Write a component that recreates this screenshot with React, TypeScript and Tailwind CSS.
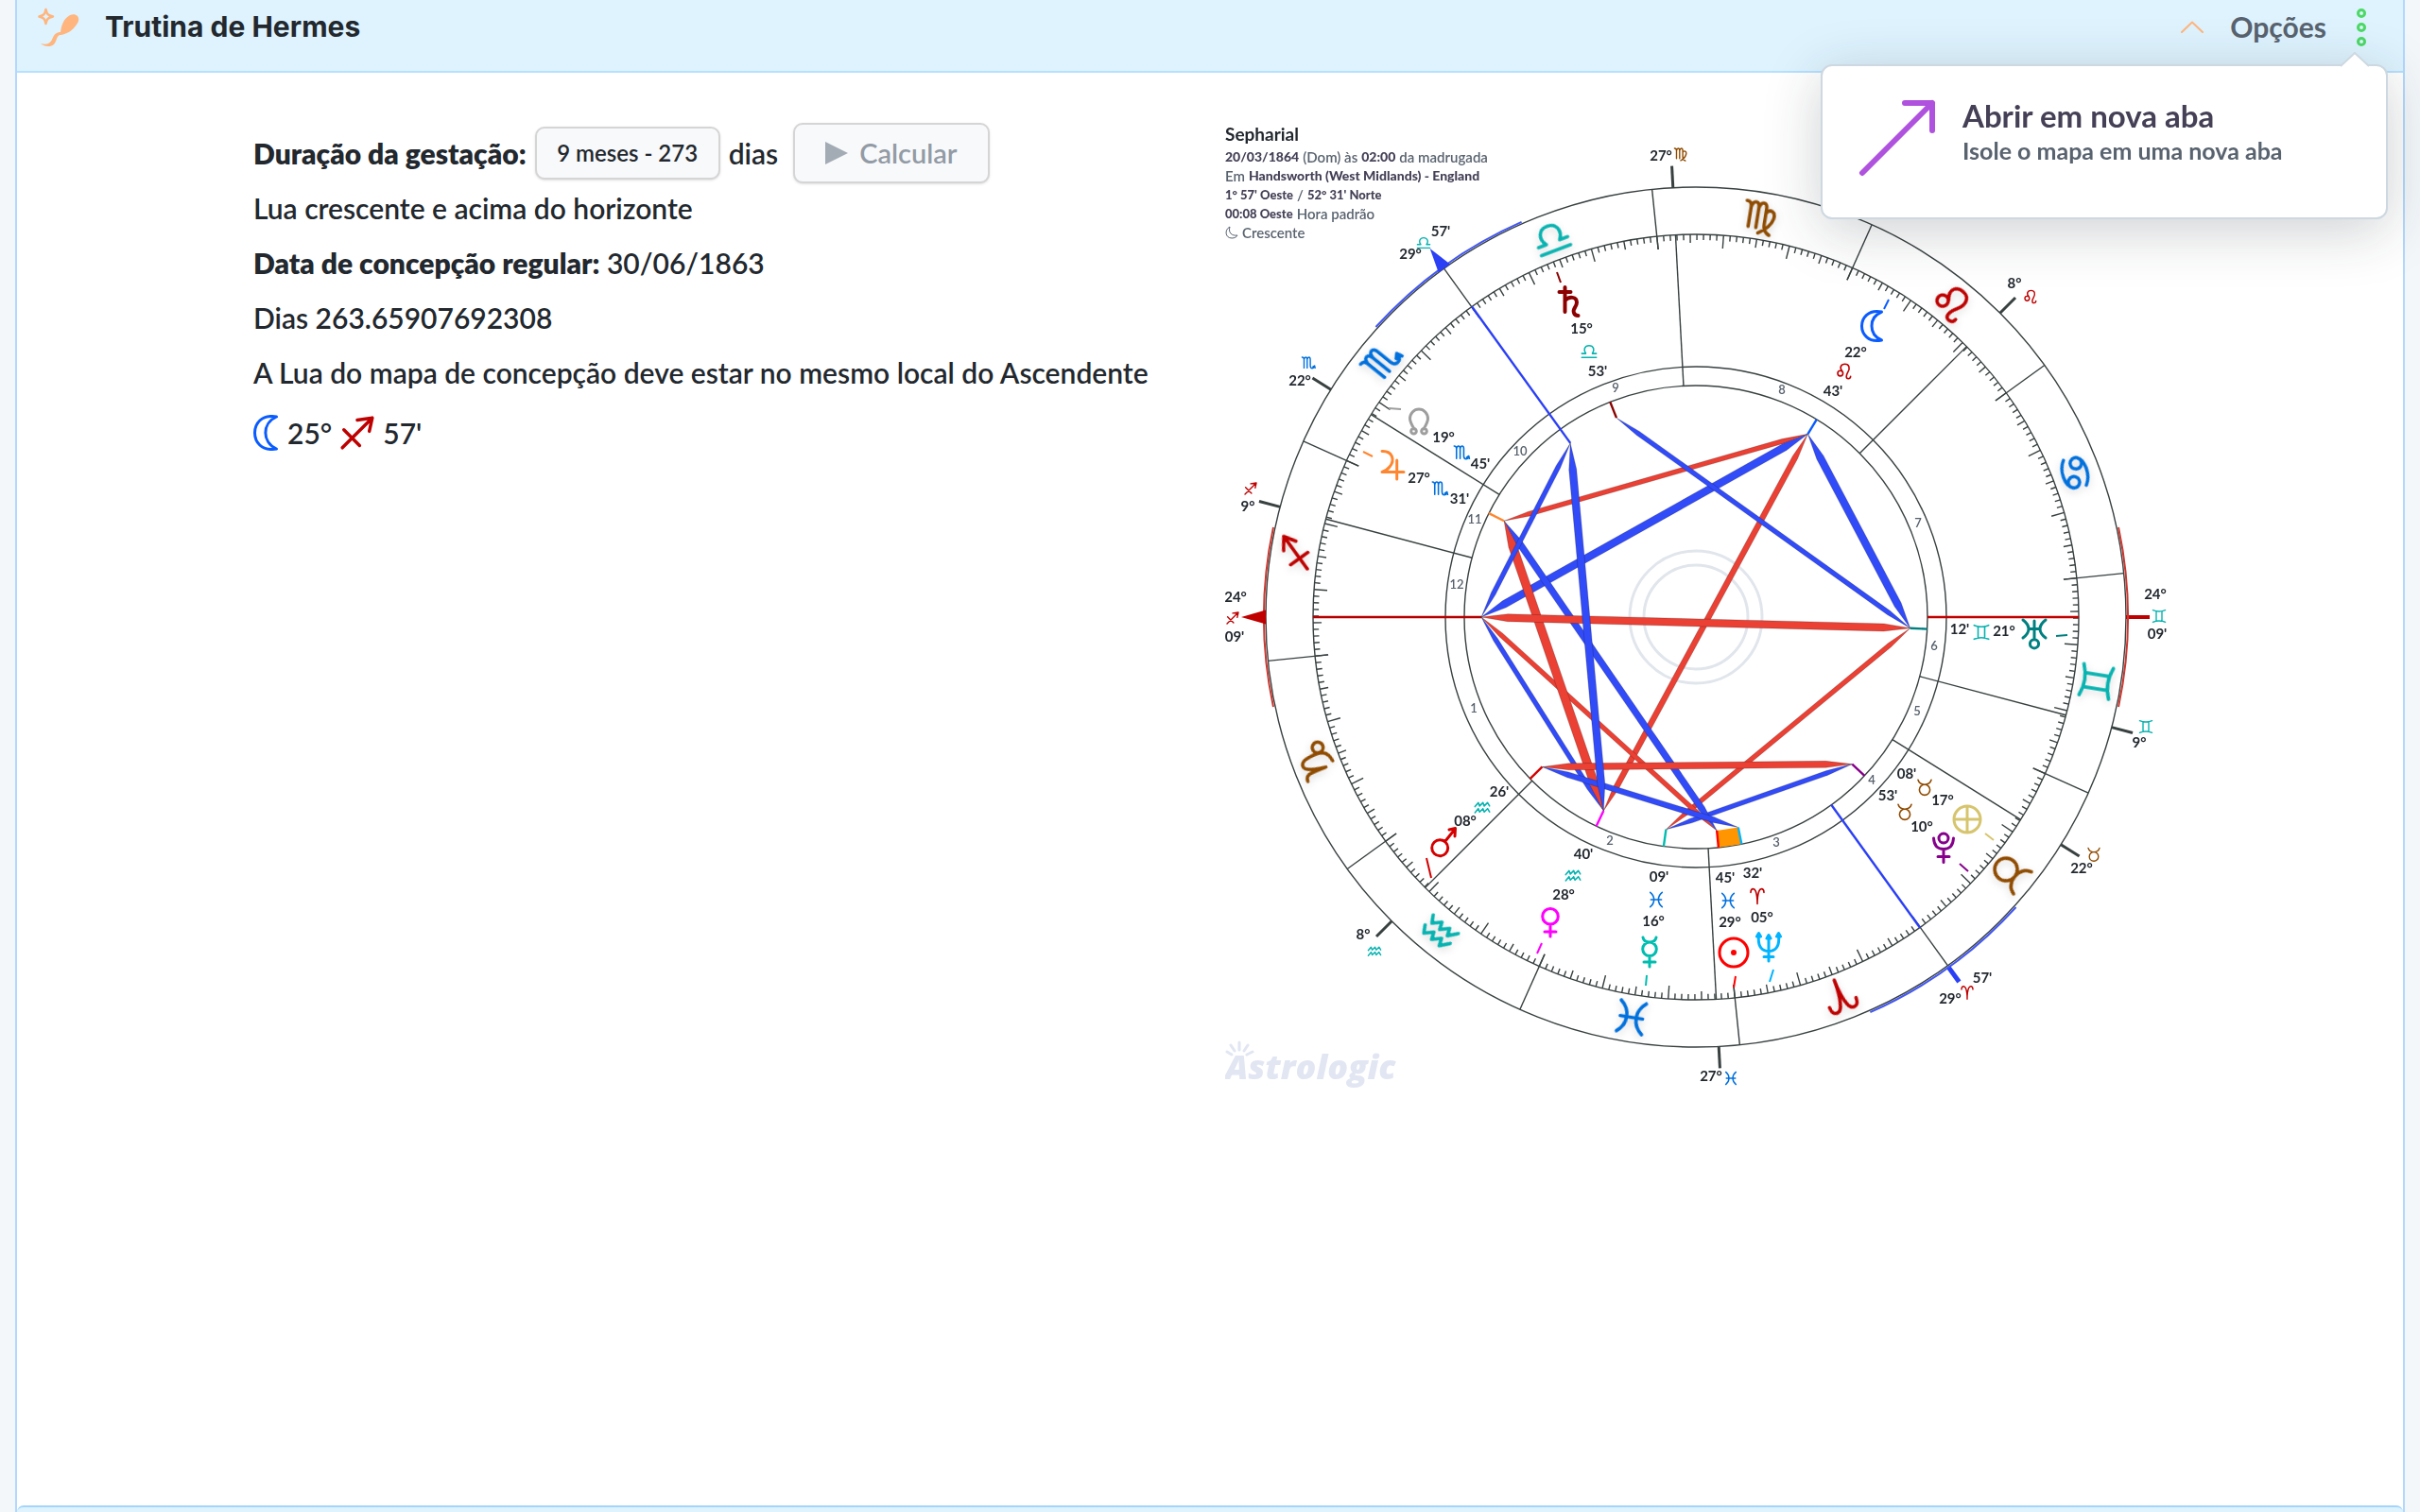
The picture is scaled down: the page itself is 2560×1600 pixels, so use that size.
import { useState } from 'react'

const ASC = 264.15
const INK = '#384040'
const BLUE = '#324bf8'
const RED = '#eb4034'

const FIRE = '#bf0000'
const EARTH = '#8f4b00'
const AIR = '#06b3b0'
const WATER = '#0070dd'

type Point = [number, number]

interface Sign {
  id: string
  color: string
  path: string
}

// Glyphs live in a 24x24 box centred on the origin
const SIGNS: Sign[] = [
  { id: 'aries', color: FIRE, path: 'M-10 -5 C-10 -12 -4.5 -12 -2.5 -7 C-1 -3 0 3 0 12 M10 -5 C10 -12 4.5 -12 2.5 -7 C1 -3 0 3 0 12' },
  { id: 'taurus', color: EARTH, path: 'M-8 4 A8 8 0 1 0 8 4 A8 8 0 1 0 -8 4 M-10 -11 C-8.5 -6 -5 -4 0 -4 C5 -4 8.5 -6 10 -11' },
  { id: 'gemini', color: AIR, path: 'M-11 -10.5 Q0 -6 11 -10.5 M-11 10.5 Q0 6 11 10.5 M-5 -8.5 V8.5 M5 -8.5 V8.5' },
  { id: 'cancer', color: WATER, path: 'M-10 -3 a4 4 0 1 0 8 0 a4 4 0 1 0 -8 0 M-9.5 -5 C-6 -10 5 -10 11 -4.5 M10 3 a4 4 0 1 0 -8 0 a4 4 0 1 0 8 0 M9.5 5 C6 10 -5 10 -11 4.5' },
  { id: 'leo', color: FIRE, path: 'M-10 3 a4 4 0 1 0 8 0 a4 4 0 1 0 -8 0 M-3 0 C-8 -6 -5 -11 1 -11 C7.5 -11 9 -5 5.5 1 C2.5 6 2 11 6 11 C8.5 11 9.5 9.5 9.5 7.5' },
  { id: 'virgo', color: EARTH, path: 'M-11 -10 Q-7.5 -10 -7.5 -6 V8 M-7.5 -6 Q-6.5 -10 -4.5 -10 Q-2 -10 -2 -6 V8 M-2 -6 Q-1 -10 1 -10 Q3.5 -10 3.5 -6 V5 Q3.5 10 8 12 M3.5 -3 C6 -7 10.5 -5 9.5 0 C8.5 5 4 9 0 11.5' },
  { id: 'libra', color: AIR, path: 'M-11 9 H11 M-11 3 H-5 C-9 -2 -7 -9 0 -9 C7 -9 9 -2 5 3 H11' },
  { id: 'scorpio', color: WATER, path: 'M-11 -10 Q-7.5 -10 -7.5 -6 V9 M-7.5 -6 Q-6.5 -10 -4.5 -10 Q-2 -10 -2 -6 V9 M-2 -6 Q-1 -10 1 -10 Q3.5 -10 3.5 -6 V5 Q3.5 9.5 7 9.5 Q10 9.5 11 6 M8 7 L11 5 L12 9' },
  { id: 'sagittarius', color: FIRE, path: 'M-10 10 L10 -10 M0 -8.5 L10 -10 L8 -1 M-9 -2 L1.5 8.5' },
  { id: 'capricorn', color: EARTH, path: 'M-11 -11 C-6 -11 -6 -8 -6 4.5 C-5 -4 -3 -10.5 0 -10.5 C4 -10.5 4.5 -6 5 0 C5.5 7 2 10 -3.5 10.5 M5.2 4 a3.8 3.8 0 1 0 7.6 0 a3.8 3.8 0 1 0 -7.6 0' },
  { id: 'aquarius', color: AIR, path: 'M-11 -2 L-6 -8 L-4 -3 L1 -8 L3 -3 L8 -8 L11 -3 M-11 7 L-6 1 L-4 6 L1 1 L3 6 L8 1 L11 6' },
  { id: 'pisces', color: WATER, path: 'M-9 -11 C-1.5 -5 -1.5 5 -9 11 M9 -11 C1.5 -5 1.5 5 9 11 M-8 0 H8' },
]

interface Planet {
  id: string
  lon: number
  color: string
  width: number
  path: string
  at: Point
  tick: [number, number, number, number]
  sign: number
  deg: string
  degAt: Point
  signAt: Point
  min: string
  minAt: Point
  ring?: boolean
}

const PLANETS: Planet[] = [
  { id: 'moon', lon: 142.72, color: '#0a5cff', width: 3, path: 'M10.5 -15 C-4 -18 -10.5 -8 -10.5 0 C-10.5 8 -4 18 10.5 15 C-3.5 9 -3.5 -9 10.5 -15Z', at: [186, -308], tick: [204, -336, 199, -326], sign: 4, deg: '22°', degAt: [169, -280], signAt: [157, -260], min: "43'", minAt: [145, -239], ring: true },
  { id: 'saturn', lon: 195.88, color: '#8b0000', width: 4, path: 'M-4.5 -15 V11 M-10.5 -10 H1.5 M-4.5 -1 C0 -6 8 -5 8 1 C8 6 3 8 5 12 Q6 15 9.5 15', at: [-134, -334], tick: [-147, -365, -143, -354], sign: 6, deg: '15°', degAt: [-121, -305], signAt: [-113, -281], min: "53'", minAt: [-104, -260], ring: true },
  { id: 'node', lon: 229.75, color: '#9e9e9e', width: 3, path: 'M-5 8 C-8 3 -9.5 0 -9.5 -3 A9.5 10 0 0 1 9.5 -3 C9.5 0 8 3 5 8 M-8.3 10.3 a2.8 2.8 0 1 0 5.6 0 a2.8 2.8 0 1 0 -5.6 0 M2.7 10.3 a2.8 2.8 0 1 0 5.6 0 a2.8 2.8 0 1 0 -5.6 0', at: [-293, -207], tick: [-325, -221, -312, -220], sign: 7, deg: '19°', degAt: [-267, -190], signAt: [-248, -174], min: "45'", minAt: [-228, -162] },
  { id: 'jupiter', lon: 237.52, color: '#ff8630', width: 3, path: 'M-11 -14.5 C0 -15 3 -5 -3 2 Q-6 6 -11 7.5 H12 M4.7 -5 V15', at: [-321, -161], tick: [-352, -175, -342, -170], sign: 7, deg: '27°', degAt: [-293, -147], signAt: [-271, -136], min: "31'", minAt: [-250, -125], ring: true },
  { id: 'mars', lon: 308.43, color: '#d40000', width: 3, path: 'M-12.3 6.3 a8.5 8.5 0 1 0 17 0 a8.5 8.5 0 1 0 -17 0 M2 -1 L12.4 -14 M6 -13 L12.5 -14.5 L12 -6', at: [-267, 238], tick: [-285, 255, -280, 276], sign: 10, deg: '08°', degAt: [-244, 216], signAt: [-226, 202], min: "26'", minAt: [-208, 185], ring: true },
  { id: 'venus', lon: 328.67, color: '#ff00ff', width: 3, path: 'M-8.3 -6.3 a8.3 8.3 0 1 0 16.6 0 a8.3 8.3 0 1 0 -16.6 0 M0 2 V15 M-6 10 H6', at: [-154, 323], tick: [-163, 345, -168, 356], sign: 10, deg: '28°', degAt: [-140, 294], signAt: [-130, 274], min: "40'", minAt: [-119, 251], ring: true },
  { id: 'mercury', lon: 346.15, color: '#00bdb0', width: 3, path: 'M-7.3 -2.7 a7.3 7.3 0 1 0 14.6 0 a7.3 7.3 0 1 0 -14.6 0 M-7 -15 Q-6 -10 0 -10 Q6 -10 7 -15 M0 5 V16 M-6 11 H6', at: [-49, 354], tick: [-52, 379, -53, 390], sign: 11, deg: '16°', degAt: [-45, 322], signAt: [-42, 299], min: "09'", minAt: [-39, 275], ring: true },
  { id: 'sun', lon: 359.75, color: '#ff0000', width: 3, path: 'M-15 0 a15 15 0 1 0 30 0 a15 15 0 1 0 -30 0 M-1.5 0 a1.5 1.5 0 1 0 3 0 a1.5 1.5 0 1 0 -3 0', at: [40, 355], tick: [42, 380, 40, 392], sign: 11, deg: '29°', degAt: [36, 323], signAt: [34, 300], min: "45'", minAt: [31, 276], ring: true },
  { id: 'neptune', lon: 5.53, color: '#00b4ff', width: 3, path: 'M-10.5 -12 C-12 1 -6 4.5 0 4.5 C6 4.5 12 1 10.5 -12 M0 -10 V15 M-5 10.5 H5 M-12.5 -11 L-10.5 -14.5 L-8.5 -11 M12.5 -11 L10.5 -14.5 L8.5 -11 M-2 -9 L0 -12.5 L2 -9', at: [77, 349], tick: [82, 373, 78, 386], sign: 0, deg: '05°', degAt: [70, 318], signAt: [65, 295], min: "32'", minAt: [60, 271], ring: true },
  { id: 'pluto', lon: 40.88, color: '#86008b', width: 3, path: 'M-5 -10 a5 5 0 1 0 10 0 a5 5 0 1 0 -10 0 M-10.5 -10 C-10 -2 -6 1.5 0 1.5 C6 1.5 10 -2 10.5 -10 M0 1.5 V15.5 M-6 9.5 H6', at: [262, 244], tick: [279, 261, 288, 269], sign: 1, deg: '10°', degAt: [239, 222], signAt: [221, 206], min: "53'", minAt: [203, 189], ring: true },
  { id: 'fortune', lon: 47.13, color: '#d6c56e', width: 3, path: 'M-14 0 a14 14 0 1 0 28 0 a14 14 0 1 0 -28 0 M-14 0 H14 M0 -14 V14', at: [287, 214], tick: [306, 229, 315, 236], sign: 1, deg: '17°', degAt: [261, 194], signAt: [242, 180], min: "08'", minAt: [223, 166] },
  { id: 'uranus', lon: 81.2, color: '#008080', width: 3, path: 'M-12 -15 C-4 -9 -4 -2 -12 4 M12 -15 C4 -9 4 -2 12 4 M-6 -5.5 H6 M0 -14 V5 M-4.6 10.3 a4.6 4.6 0 1 0 9.2 0 a4.6 4.6 0 1 0 -9.2 0', at: [358, 18], tick: [381, 20, 393, 19], sign: 2, deg: '21°', degAt: [326, 15], signAt: [302, 16], min: "12'", minAt: [279, 13], ring: true },
]

const ANGLES = { asc: ASC, mc: 209.95 }
const CUSPS = [309.15, 357.2, 52.2, 69.3, 129.15, 177.2, 232.2, 249.3]

// [text, x, y, sign, sign x, sign y]
const CUSP_LABELS: [string, number, number, number, number, number][] = [
  ['24°', -487, -21, 8, -490, 1],
  ['24°', 486, -24, 2, 490, -1],
  ['29°', -302, -384, 6, -288, -396],
  ['29°', 269, 404, 0, 287, 397],
  ['27°', -37, -488, 5, -16, -490],
  ['8°', 337, -353, 4, 354, -339],
  ['22°', -419, -250, 7, -410, -269],
  ['9°', -474, -117, 8, -471, -136],
  ['8°', -352, 336, 10, -340, 354],
  ['27°', 16, 486, 11, 37, 488],
  ['22°', 408, 266, 1, 421, 251],
  ['9°', 469, 133, 2, 476, 116],
]

const MINUTE_LABELS: [string, number, number][] = [
  ["09'", -488, 21],
  ["09'", 488, 18],
  ["57'", -270, -408],
  ["57'", 303, 382],
]

const HOUSES: Point[] = [
  [-235, 97],
  [-91, 237],
  [85, 239],
  [186, 173],
  [234, 100],
  [252, 31],
  [235, -99],
  [91, -240],
  [-85, -242],
  [-186, -175],
  [-234, -103],
  [-253, -34],
]

// [from, to, colour, width]
const ASPECTS: [string, string, string, number][] = [
  ['jupiter', 'moon', RED, 5],
  ['asc', 'moon', BLUE, 8],
  ['moon', 'uranus', BLUE, 8],
  ['moon', 'venus', RED, 6],
  ['mercury', 'uranus', RED, 5],
  ['mercury', 'pluto', BLUE, 5],
  ['asc', 'sun', RED, 5],
  ['jupiter', 'sun', BLUE, 7],
  ['asc', 'venus', BLUE, 5],
  ['jupiter', 'venus', RED, 9],
  ['mars', 'pluto', RED, 7],
  ['mars', 'neptune', BLUE, 6],
  ['asc', 'uranus', RED, 8],
  ['saturn', 'uranus', BLUE, 5],
  ['asc', 'mc', BLUE, 5],
  ['mc', 'venus', BLUE, 8],
]

function polar(lon: number, r: number): Point {
  const a = ((180 + lon - ASC) * Math.PI) / 180
  return [r * Math.cos(a), -r * Math.sin(a)]
}

function lonOf(id: string) {
  if (id === 'asc') return ANGLES.asc
  if (id === 'mc') return ANGLES.mc
  return PLANETS.find((p) => p.id === id)!.lon
}

function Ray({ lon, from, to, color = INK, width = 1.4 }: { lon: number; from: number; to: number; color?: string; width?: number }) {
  const [x1, y1] = polar(lon, from)
  const [x2, y2] = polar(lon, to)
  return <line x1={x1} y1={y1} x2={x2} y2={y2} stroke={color} strokeWidth={width} />
}

function SignGlyph({ sign, x, y, scale, width, rotate = 0 }: { sign: number; x: number; y: number; scale: number; width: number; rotate?: number }) {
  return (
    <path
      d={SIGNS[sign].path}
      transform={`translate(${x} ${y}) rotate(${rotate}) scale(${scale})`}
      fill="none"
      stroke={SIGNS[sign].color}
      strokeWidth={width / scale}
      strokeLinecap="round"
      strokeLinejoin="round"
    />
  )
}

function Aspect({ from, to, color, width }: { from: string; to: string; color: string; width: number }) {
  const [x1, y1] = polar(lonOf(from), 227)
  const [x2, y2] = polar(lonOf(to), 227)
  const len = Math.hypot(x2 - x1, y2 - y1)
  const ux = (x2 - x1) / len
  const uy = (y2 - y1) / len
  const h = width / 2
  const t = 28
  const points = [
    [x1, y1],
    [x1 + ux * t - uy * h, y1 + uy * t + ux * h],
    [x2 - ux * t - uy * h, y2 - uy * t + ux * h],
    [x2, y2],
    [x2 - ux * t + uy * h, y2 - uy * t - ux * h],
    [x1 + ux * t + uy * h, y1 + uy * t - ux * h],
  ]
  return <polygon points={points.map((p) => p.join(',')).join(' ')} fill={color} stroke="#000000" strokeOpacity={0.2} />
}

function arc(center: number, r: number) {
  const [x1, y1] = polar(center - 12, r)
  const [x2, y2] = polar(center + 12, r)
  return `M${x1} ${y1} A${r} ${r} 0 0 0 ${x2} ${y2}`
}

function arrowHead(lon: number) {
  return [polar(lon, 481), polar(lon - 0.95, 455), polar(lon + 0.95, 455)].map((p) => p.join(',')).join(' ')
}

function NatalChart() {
  const degrees = Array.from({ length: 360 }, (_, i) => i)
  const conjunction = [polar(359.75, 227), polar(5.53, 227), polar(5.53, 245), polar(359.75, 245)]

  return (
    <svg viewBox="-498 -513 1008 1013" width={1008} height={1013} role="img" aria-label="Mapa astral de Sepharial" className="block">
      <g fill="none" stroke="#e1e6ec" strokeWidth={3}>
        <circle r={55} />
        <circle r={70} />
      </g>

      <g fill="none" stroke={INK} strokeWidth={1.4}>
        <circle r={455} />
        <circle r={405} />
        <circle r={265} />
        <circle r={245} />
      </g>

      {degrees.map((d) => (
        <Ray key={d} lon={d} from={405} to={d % 10 === 0 ? 391 : d % 5 === 0 ? 396 : 399} />
      ))}

      {SIGNS.map((s, i) => (
        <Ray key={s.id} lon={i * 30} from={455} to={391} />
      ))}

      {CUSPS.map((lon) => (
        <g key={lon}>
          <Ray lon={lon} from={405} to={245} />
          <Ray lon={lon} from={455} to={478} width={3} />
        </g>
      ))}

      {/* Angles */}
      <Ray lon={ASC} from={405} to={227} color="#b40000" width={2.4} />
      <Ray lon={ASC - 180} from={405} to={245} color="#c00000" width={2.4} />
      <Ray lon={ASC - 180} from={455} to={480} color="#c00000" width={4} />
      <Ray lon={209.95} from={405} to={227} color="#2b40f5" width={2.4} />
      <Ray lon={29.95} from={405} to={245} color="#2b40f5" width={2.4} />
      <Ray lon={29.95} from={456} to={476} color="#2b40f5" width={5} />
      <g fill="none" strokeWidth={2}>
        <path d={arc(ASC, 457)} stroke="#c8372f" />
        <path d={arc(ASC - 180, 457)} stroke="#c8372f" />
        <path d={arc(209.95, 457)} stroke="#4257f2" />
        <path d={arc(29.95, 457)} stroke="#4257f2" />
      </g>
      <polygon points={arrowHead(ASC)} fill="#c00000" />
      <polygon points={arrowHead(209.95)} fill="#2b40f5" />

      {/* Aspects */}
      {ASPECTS.map(([from, to, color, width]) => (
        <Aspect key={from + to} from={from} to={to} color={color} width={width} />
      ))}
      <polygon points={conjunction.map((p) => p.join(',')).join(' ')} fill="#ff9500" />
      {PLANETS.filter((p) => p.ring).map((p) => (
        <Ray key={p.id} lon={p.lon} from={227} to={245} color={p.color} width={2.4} />
      ))}

      {/* Zodiac belt */}
      <g className="drop-shadow-[0_3px_4px_rgba(0,0,0,0.15)]">
        {SIGNS.map((s, i) => {
          const [x, y] = polar(i * 30 + 15, 429)
          return <SignGlyph key={s.id} sign={i} x={x} y={y} scale={1.5} width={3.6} rotate={ASC - 90 - (i * 30 + 15)} />
        })}
      </g>

      {PLANETS.map((p) => (
        <g key={p.id}>
          <path
            d={p.path}
            transform={`translate(${p.at[0]} ${p.at[1]})`}
            fill="none"
            stroke={p.color}
            strokeWidth={p.width}
            strokeLinecap="round"
            strokeLinejoin="round"
          />
          <line x1={p.tick[0]} y1={p.tick[1]} x2={p.tick[2]} y2={p.tick[3]} stroke={p.color} strokeWidth={2} />
          <SignGlyph sign={p.sign} x={p.signAt[0]} y={p.signAt[1]} scale={0.7} width={1.6} />
        </g>
      ))}

      {CUSP_LABELS.map(([text, x, y, sign, sx, sy]) => (
        <SignGlyph key={text + x} sign={sign} x={sx} y={sy} scale={0.6} width={1.4} />
      ))}

      <g className="text-[15px] font-bold" fill="#22282e" textAnchor="middle">
        {PLANETS.map((p) => (
          <g key={p.id}>
            <text x={p.degAt[0]} y={p.degAt[1] + 5}>{p.deg}</text>
            <text x={p.minAt[0]} y={p.minAt[1] + 5}>{p.min}</text>
          </g>
        ))}
        {CUSP_LABELS.map(([text, x, y]) => (
          <text key={text + x} x={x} y={y + 5}>{text}</text>
        ))}
        {MINUTE_LABELS.map(([text, x, y]) => (
          <text key={text + x} x={x} y={y + 5}>{text}</text>
        ))}
      </g>

      <g className="text-[13px] font-semibold" fill="#56606c" textAnchor="middle">
        {HOUSES.map(([x, y], i) => (
          <text key={i} x={x} y={y + 4}>{i + 1}</text>
        ))}
      </g>

      {/* Brand */}
      <text x={-498} y={489} fill="#e1e6f2" className="font-['Open_Sans'] text-[36px] font-extrabold italic">Astrologic</text>
      <path
        d="M-483 458 V450 M-478 459 L-474 453 M-488 459 L-492 453 M-475 463 L-469 460 M-491 463 L-496 460"
        fill="none"
        stroke="#e1e6f2"
        strokeWidth={3}
        strokeLinecap="round"
      />
    </svg>
  )
}

function WandIcon() {
  return (
    <svg width="44" height="42" viewBox="0 0 44 42" aria-hidden="true">
      <path d="M8.500 2 C9.500 7 10.500 8 16 9.500 C10.500 11 9.500 12 8.500 17 C7.500 12 6.500 11 1.500 9.500 C6.500 8 7.500 7 8.500 2 Z" fill="none" stroke="#ffb57d" strokeWidth="2.500" strokeLinejoin="round" />
      <path d="M34 8 C42 5 46 12 41 18 C37 24 32 27 28 28 C25 30 22 27 20 33 C18 39 16 41 11 41 C8 41 5 40 3 38 C9 40 13 38 15 34 C17 28 20 26 24 26 C25 19 27 12 34 8 Z" fill="#ffb57d" />
    </svg>
  )
}

export default function App() {
  const [duration, setDuration] = useState('273')
  const [open, setOpen] = useState(true)

  return (
    <div className="min-h-screen bg-[#f3f7fa] px-4 font-['Lato',sans-serif] text-[#22282e]">
      <div className="flex min-h-screen flex-col border-x-2 border-[#b2d8ff] bg-white">
        <header className="relative flex h-[77px] items-center border-b-2 border-[#b5e0ff] bg-[#def3fe] pr-[39px] pb-[18px] pl-[22px]">
          <WandIcon />
          <h1 className="ml-[27px] font-['Inter'] text-[30px] font-bold">Trutina de Hermes</h1>

          <div className="ml-auto flex items-center">
            <button type="button" aria-label="Recolher" className="mr-7">
              <svg width="24" height="14" viewBox="0 0 24 14" fill="none" stroke="#ffb57d" strokeWidth="2" strokeLinecap="round" strokeLinejoin="round">
                <path d="M1 12 L12 1.500 L23 12" />
              </svg>
            </button>
            <button type="button" onClick={() => setOpen(!open)} className="flex items-center gap-8 text-[30px] font-bold text-[#59636f]">
              Opções
              <svg width="10" height="42" viewBox="0 0 10 42" fill="none" stroke="#4cd964" strokeWidth="3" aria-hidden="true">
                <circle cx="5" cy="6" r="3.500" />
                <circle cx="5" cy="21" r="3.500" />
                <circle cx="5" cy="36" r="3.500" />
              </svg>
            </button>
          </div>

          {open && (
            <div className="absolute top-[68px] right-4 z-10 w-[600px] rounded-xl border-2 border-[#cdd8e0] bg-white shadow-[0_12px_60px_rgba(30,40,50,0.22)]">
              <svg width="30" height="16" viewBox="0 0 30 16" className="absolute -top-[15px] right-[18px]" aria-hidden="true">
                <path d="M0 15 L15 1 L30 15 V16 H0 Z" fill="#ffffff" />
                <path d="M0 15 L15 1 L30 15" fill="none" stroke="#cdd8e0" strokeWidth="2" />
              </svg>
              <a href="#nova-aba" className="flex h-40 gap-7 pt-[30px] pl-[38px]">
                <svg width="82" height="90" viewBox="0 0 82 90" fill="none" stroke="#af52de" strokeWidth="6" strokeLinecap="round" strokeLinejoin="round" aria-hidden="true">
                  <path d="M4 83 L78 9 M49 9 H78 V38" />
                </svg>
                <span className="flex flex-col">
                  <strong className="text-[33px] leading-[44px] font-bold text-[#454056]">Abrir em nova aba</strong>
                  <span className="text-[25px] leading-[30px] font-bold text-[#59636f]">Isole o mapa em uma nova aba</span>
                </span>
              </a>
            </div>
          )}
        </header>

        <main className="grid flex-1 grid-cols-2">
          <section className="pt-14 pl-[250px] text-[30px] font-semibold">
            <div className="flex h-[58px] items-center">
              <label htmlFor="duration" className="font-extrabold">Duração da gestação:</label>
              <select
                id="duration"
                value={duration}
                onChange={(e) => setDuration(e.target.value)}
                className="mx-[9px] h-14 w-[196px] appearance-none rounded-[10px] border-2 border-[#d5d5d5] bg-[#f8f9fb] px-5 text-center text-[24px] shadow-sm"
              >
                <option value="273">9 meses - 273</option>
              </select>
              dias
              <button type="button" className="ml-4 flex h-16 w-[208px] shrink-0 items-center gap-3 rounded-[10px] border-2 border-[#d5d5d5] bg-[#f8f9fb] pl-8 text-[29px] text-[#929ba5] shadow-sm">
                <svg width="24" height="24" viewBox="0 0 24 24" fill="#a3abb5" aria-hidden="true">
                  <path d="M0 0 L24 12 L0 24 Z" />
                </svg>
                Calcular
              </button>
            </div>
            <p className="flex h-[58px] items-center">Lua crescente e acima do horizonte</p>
            <p className="flex h-[58px] items-center whitespace-pre"><strong className="font-extrabold">Data de concepção regular:</strong> 30/06/1863</p>
            <p className="flex h-[58px] items-center">Dias 263.65907692308</p>
            <p className="flex h-[58px] items-center whitespace-nowrap">A Lua do mapa de concepção deve estar no mesmo local do Ascendente</p>
            <p className="flex h-[70px] items-center gap-2">
              <svg width="28" height="38" viewBox="-13 -19 28 38" fill="none" stroke="#0a5cff" strokeWidth="3" strokeLinejoin="round" aria-label="Lua">
                <path d="M11.500 -17 C-5 -20 -11.500 -9 -11.500 0 C-11.500 9 -5 20 11.500 17 C-4 10 -4 -10 11.500 -17Z" />
              </svg>
              25°
              <svg width="38" height="38" viewBox="-12 -12 24 24" fill="none" stroke="#bf0000" strokeWidth="2.200" strokeLinecap="round" strokeLinejoin="round" aria-label="Sagitário">
                <path d={SIGNS[8].path} />
              </svg>
              57'
            </p>
          </section>

          <section className="relative pt-[63px] pl-4">
            <NatalChart />
            <div className="absolute top-[53px] left-4 text-[15px] leading-5 font-semibold text-[#59636f]">
              <h2 className="pb-0.5 text-[19px] leading-6 font-bold text-[#22282e]">Sepharial</h2>
              <p className="flex h-5 items-center gap-1 whitespace-nowrap">
                <strong className="text-[14px] text-[#454056]">20/03/1864</strong> (Dom) às <strong className="text-[14px] text-[#454056]">02:00</strong> da madrugada
              </p>
              <p className="flex h-5 items-center gap-1 whitespace-nowrap">
                Em <strong className="text-[14px] text-[#454056]">Handsworth (West Midlands) - England</strong>
              </p>
              <p className="flex h-5 items-center gap-1">
                <strong className="text-[13px] text-[#454056]">1° 57' Oeste</strong> / <strong className="text-[13px] text-[#454056]">52° 31' Norte</strong>
              </p>
              <p className="flex h-5 items-center gap-1">
                <strong className="text-[13px] text-[#454056]">00:08 Oeste</strong> Hora padrão
              </p>
              <p className="flex h-5 items-center gap-1">
                <svg width="14" height="14" viewBox="0 0 14 14" fill="none" stroke="#59636f" aria-hidden="true">
                  <path d="M5 1 C-1 4 0 13 7 13 C10 13 12 12 13 10 C7 11 3 7 5 1 Z" strokeLinejoin="round" />
                </svg>
                Crescente
              </p>
            </div>
          </section>
        </main>

        <footer className="h-[7px] rounded-t-xl border-t-2 border-[#a3d5fc] bg-[#def3fe]"></footer>
      </div>
    </div>
  )
}
